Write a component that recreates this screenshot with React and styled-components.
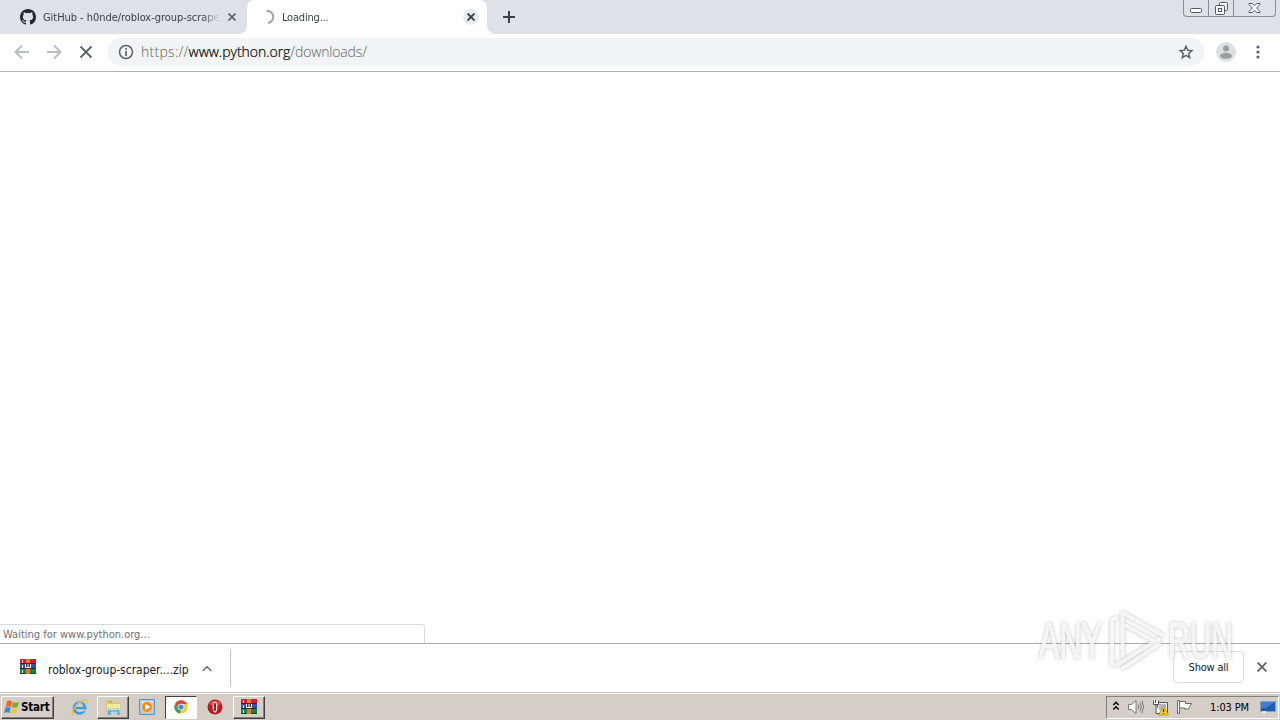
import styled, { createGlobalStyle, css } from 'styled-components'

const GlobalStyle = createGlobalStyle`
  * {
    box-sizing: border-box;
  }
  body {
    margin: 0;
    overflow: hidden;
    background: #ffffff;
    font-family: "DejaVu Sans Condensed", "DejaVu Sans", sans-serif;
    font-stretch: condensed;
    font-size: 11px;
    color: #202124;
  }
  svg {
    display: block;
    flex: none;
  }
`
const Screen = styled.div`
  position: relative;
  display: flex;
  flex-direction: column;
  width: 1280px;
  height: 720px;
  overflow: hidden;
`
const TabStrip = styled.div`
  display: flex;
  height: 34px;
  background: #dee1e6;
`
const Tab = styled.div`
  position: relative;
  display: flex;
  align-items: center;
  width: ${(p) => (p.$active ? 240 : 247)}px;
  height: 34px;
  padding-left: ${(p) => (p.$active ? 13 : 20)}px;
  padding-right: ${(p) => (p.$active ? 8 : 7)}px;
  ${(p) => p.$active && css`
    background: #ffffff;
    border-radius: 8px 8px 0 0;
    &::before, &::after {
      content: '';
      position: absolute;
      bottom: 0;
      width: 8px;
      height: 8px;
    }
    &::before {
      left: -8px;
      background: radial-gradient(circle at 0 0, transparent 7.5px, #ffffff 8px);
    }
    &::after {
      right: -8px;
      background: radial-gradient(circle at 100% 0, transparent 7.5px, #ffffff 8px);
    }
  `}
`
const TabTitle = styled.span`
  flex: 1;
  overflow: hidden;
  margin-left: ${(p) => p.$gap}px;
  padding-top: 1px;
  white-space: nowrap;
  line-height: 16px;
  letter-spacing: ${(p) => p.$spacing}px;
  color: #3c4043;
  mask-image: linear-gradient(to right, #000 calc(100% - 18px), transparent);
`
const TabClose = styled.span`
  display: flex;
  align-items: center;
  justify-content: center;
  width: 16px;
  height: 16px;
  margin-left: 4px;
  border-radius: 50%;
  background: ${(p) => (p.$active ? '#e8eaed' : 'transparent')};
`
const NewTab = styled.div`
  display: flex;
  align-items: center;
  justify-content: center;
  width: 28px;
  margin-left: 8px;
`
const WindowButtons = styled.div`
  display: flex;
  width: 93px;
  height: 17px;
  margin: 0 4px 0 auto;
  border: 1px solid #8a8d93;
  border-top: none;
  border-radius: 0 0 4px 4px;
`
const WindowButton = styled.span`
  display: flex;
  align-items: center;
  justify-content: center;
  width: ${(p) => p.$width}px;
  & + & {
    border-left: 1px solid #8a8d93;
  }
`
const Toolbar = styled.div`
  display: flex;
  align-items: center;
  height: 38px;
  padding: 0 14px 1px;
  border-bottom: 1px solid #b1b2b3;
  background: #ffffff;
`
const NavIcons = styled.div`
  display: flex;
  gap: 16px;
`
const Omnibox = styled.div`
  display: flex;
  align-items: center;
  width: 1096px;
  height: 28px;
  margin: 0 12px 0 14px;
  padding: 0 10px;
  border-radius: 14px;
  background: #f1f3f4;
`
const Url = styled.span`
  flex: 1;
  margin: 0 0 1px 7px;
  font-family: "Open Sans", sans-serif;
  font-stretch: normal;
  font-weight: 300;
  font-size: 14px;
  letter-spacing: -0.15px;
  color: #5f6368;
  b {
    font-weight: 300;
    letter-spacing: -0.03px;
    color: #000000;
    -webkit-text-stroke: 0.2px #000000;
  }
`
const Scheme = styled.span`
  letter-spacing: 0.28px;
`
const Viewport = styled.main`
  display: flex;
  align-items: flex-end;
  flex: 1;
`
const Status = styled.div`
  width: 425px;
  height: 19px;
  padding: 0 3px;
  border: 1px solid #d9dadb;
  border-left: none;
  border-bottom: none;
  border-radius: 0 4px 0 0;
  line-height: 19px;
  color: #6c6f73;
`
const Shelf = styled.div`
  display: flex;
  align-items: center;
  height: 50px;
  border-top: 1px solid #a9a9a9;
  border-bottom: 1px solid #c9c7c4;
`
const Download = styled.div`
  display: flex;
  align-items: center;
  width: 231px;
  height: 38px;
  padding-left: 20px;
  border-right: 1px solid #c4c4c4;
  > svg:first-child {
    margin-bottom: 2px;
  }
`
const FileName = styled.span`
  width: 142px;
  margin: 3px 12px 0 12px;
  white-space: nowrap;
  font-size: 12px;
  letter-spacing: -0.02px;
`
const ShowAll = styled.button`
  width: 71px;
  height: 32px;
  margin: 0 13px 3px auto;
  padding: 1px 0 0;
  border: 1px solid #dadce0;
  border-radius: 4px;
  background: transparent;
  font: inherit;
  letter-spacing: -0.2px;
  color: #202124;
`
const ShelfClose = styled.span`
  margin: 0 13px 3px 0;
`
const Taskbar = styled.footer`
  display: flex;
  align-items: center;
  height: 27px;
  border-top: 1px solid #ffffff;
  background: #d5cec7;
`
const StartButton = styled.div`
  display: flex;
  align-items: center;
  width: 53px;
  height: 23px;
  margin: 0 9px 0 1px;
  padding-left: 2px;
  border: 1px solid;
  border-color: #ffffff #404040 #404040 #ffffff;
  box-shadow: inset -1px -1px 0 #858078;
  font-weight: 700;
  font-size: 11.5px;
  letter-spacing: -0.2px;
  color: #000000;
`
const TaskItem = styled.div`
  display: flex;
  align-items: center;
  justify-content: center;
  width: 32px;
  height: 23px;
  margin-right: 2px;
  border: 1px solid transparent;
  ${(p) => p.$state === 'open' && css`
    border-color: #ffffff #404040 #404040 #ffffff;
    box-shadow: inset -1px -1px 0 #858078;
  `}
  ${(p) => p.$state === 'active' && css`
    border-color: #404040 #ffffff #ffffff #404040;
    background: #fdfdfc;
  `}
`
const Tray = styled.div`
  display: flex;
  align-items: center;
  width: 173px;
  height: 23px;
  margin: 0 1px 0 auto;
  padding-left: 5px;
  border: 1px solid;
  border-color: #858078 #ffffff #ffffff #858078;
  color: #000000;
`
const TrayIconList = styled.div`
  display: flex;
  align-items: center;
  gap: 7px;
`
const Clock = styled.span`
  width: 41px;
  margin: 0 9px 0 17px;
  white-space: nowrap;
  letter-spacing: -0.12px;
`
const MenuDots = styled.svg`
  margin-left: 20px;
`
const Watermark = styled.svg`
  position: absolute;
  left: 1030px;
  top: 600px;
  pointer-events: none;
  filter: drop-shadow(0 0 1px rgba(0, 0, 0, 0.18)) drop-shadow(0 0 2px rgba(0, 0, 0, 0.16));
`

const Cross = ({ size = 8, color = '#5f6368', width = 1.7 }) => (
  <svg width={size} height={size} viewBox="0 0 8 8" stroke={color} strokeWidth={width}>
    <path d="M.5.5l7 7M7.500.5l-7 7" />
  </svg>
)

const GitHubMark = () => (
  <svg width="16" height="16" viewBox="0 0 16 16" fill="#24292e">
    <path d="M8 0C3.58 0 0 3.58 0 8c0 3.54 2.29 6.53 5.47 7.59.4.07.55-.17.55-.38 0-.19-.01-.82-.01-1.49-2.01.37-2.53-.49-2.69-.94-.09-.23-.48-.94-.82-1.13-.28-.15-.68-.52-.01-.53.63-.01 1.08.58 1.23.82.72 1.21 1.87.87 2.33.66.07-.52.28-.87.51-1.07-1.78-.2-3.64-.89-3.64-3.95 0-.87.31-1.59.82-2.15-.08-.2-.36-1.02.08-2.12 0 0 .67-.21 2.2.82a7.6 7.6 0 0 1 4 0c1.53-1.04 2.2-.82 2.2-.82.44 1.1.16 1.92.08 2.12.51.56.82 1.27.82 2.15 0 3.07-1.87 3.75-3.65 3.95.29.25.54.73.54 1.48 0 1.07-.01 1.93-.01 2.2 0 .21.15.46.55.38A8 8 0 0 0 16 8c0-4.42-3.58-8-8-8z" />
  </svg>
)

const Books = () => (
  <svg width="16" height="16" viewBox="0 0 16 16">
    <path fill="#c42434" d="M0 0h16v5H0z" />
    <path fill="#3a50a8" d="M0 5h16v5H0z" />
    <path fill="#16843a" d="M0 10h16v5H0z" />
    <path fill="#571629" d="M0 4h16v1H0z" />
    <path fill="#17284e" d="M0 9h16v1H0z" />
    <path fill="#0b4d22" d="M0 14h16v1H0z" />
    <path fill="#e57535" d="M6 0h4v15H6z" />
    <path fill="#493021" d="M5 4h6v6H5z" />
    <path stroke="#fff" fill="none" d="M5.500 5v3.500h5V5M8 5v3.500" />
    <path stroke="#f2dcb1" d="M2.500 1v3M2.500 6v3M2.500 11v3" />
  </svg>
)

const WindowsFlag = () => (
  <svg width="17" height="17" viewBox="0 0 17 17">
    <path fill="#ee6827" d="M3 2.500c2-1.500 3.700-1 5.300 0L7 8C5 7 3.700 7 1.600 8z" />
    <path fill="#78ad36" d="M9 3c2 1 3.700.8 5.800-.2L13.500 8c-2 1-3.800 1-5.700.1z" />
    <path fill="#3989cc" d="M1.400 8.800c2-1 3.600-.9 5.300 0l-1.300 5.100C3.600 13 2 13 0 14z" />
    <path fill="#f7c43b" d="M7.500 9c2 1 3.800.9 5.700-.1L12 14c-2 1.200-3.900 1-5.800 0z" />
  </svg>
)

const Explorer = () => (
  <svg width="17" height="17" viewBox="0 0 17 17">
    <circle cx="8.500" cy="9" r="5.500" fill="none" stroke="#3b9be0" strokeWidth="2.700" />
    <path fill="#d5cec7" d="M9 10.300h8v2H9z" />
    <path fill="#3b9be0" d="M5 8h10.300v2.200H5z" />
    <path fill="none" stroke="#e8bd3c" strokeWidth="1.200" d="M2 15.800C-1 13 9-.5 15 1.300c1.500.6 1 2.500.5 3.500" />
    <path fill="none" stroke="#a5daf8" d="M4.500 6.500c2-3 5.500-3 7-1" />
  </svg>
)

const Folder = () => (
  <svg width="17" height="17" viewBox="0 0 17 17">
    <path fill="#e3c566" d="M1 1.500h6l1 2h7V13H1z" />
    <path fill="#f8e9a0" d="M2 5h13v7H2z" />
    <path fill="#7ebd65" d="M4 2h3v1.500H4z" />
    <path fill="#62b5e0" d="M3 9.500h11l1 6.500h-3v-3.500H6V16H2.500z" />
    <path fill="#d2f0fb" d="M4 10h9v1H4z" />
  </svg>
)

const MediaPlayer = () => (
  <svg width="16" height="16" viewBox="0 0 16 16">
    <path fill="#a9cce5" stroke="#5795c4" d="M.5.500h15v15H.5z" />
    <path fill="#d8eaf5" d="M2 2h12v2H2z" />
    <circle cx="8" cy="8" r="5.500" fill="#f0891e" stroke="#fad4a2" />
    <path fill="#fff" d="M6.200 4.800L11.500 8l-5.300 3.200z" />
  </svg>
)

const Chrome = () => (
  <svg width="14" height="14" viewBox="0 0 16 16">
    <circle cx="8" cy="8" r="7.500" fill="#f7cb32" />
    <path fill="#dc4638" d="M1.200 4.500A7.500 7.500 0 0 1 14.800 4.600H8L4.900 9.800z" />
    <path fill="#3ba457" d="M1.200 4.500L4.900 9.800 8 11.400l-1 4A7.500 7.500 0 0 1 1.200 4.500z" />
    <circle cx="8" cy="8" r="3.700" fill="#fff" />
    <circle cx="8" cy="8" r="2.900" fill="#4687e8" />
  </svg>
)

const Opera = () => (
  <svg width="16" height="16" viewBox="0 0 16 16">
    <circle cx="8" cy="8" r="7.500" fill="#b51b20" />
    <path fill="#df4c4a" d="M2 5c2-4.500 10-4.500 12 0-3 2-9 2-12 0z" />
    <ellipse cx="8" cy="8" rx="2.400" ry="5.600" fill="#fff" />
    <ellipse cx="8" cy="8" rx="1.200" ry="4.600" fill="#a5191e" />
  </svg>
)

const tasks = [
  { id: 'ie', icon: <Explorer /> },
  { id: 'folder', icon: <Folder />, state: 'open' },
  { id: 'media', icon: <MediaPlayer /> },
  { id: 'chrome', icon: <Chrome />, state: 'active' },
  { id: 'opera', icon: <Opera /> },
  { id: 'winrar', icon: <Books />, state: 'open' },
]

const TrayIcons = () => (
  <TrayIconList>
    <svg width="8" height="14" viewBox="0 0 8 14" fill="none" stroke="#000" strokeWidth="1.400">
      <path d="M1.300 5L4 2.300 6.700 5M1.300 9.500L4 6.800l2.700 2.700" />
    </svg>
    <svg width="18" height="16" viewBox="0 0 18 16" fill="none" stroke="#77787a">
      <path fill="#fff" d="M1.500 5.500h3L9 1.500v13l-4.500-4h-3z" />
      <path d="M11 5.500q1.500 2.500 0 5M13 3.500q2.500 4.500 0 9M15 1.500q3 6.500 0 13" />
    </svg>
    <svg width="17" height="17" viewBox="0 0 17 17">
      <path fill="#eef0f1" stroke="#55585a" d="M5.500 3.500h10v10h-10z" />
      <path fill="#b4b7ba" d="M7 5h7v6H7z" />
      <path fill="#fff" stroke="#4d5052" d="M1.500 1.500v4h5v-4M3.500 1v3M4 5.500v9h4" />
      <path fill="#f4ce17" stroke="#b58c09" strokeWidth=".7" d="M11.500 7l5 9h-10z" />
      <path stroke="#222" strokeWidth="1.200" d="M11.500 10v3M11.500 14v1" />
    </svg>
    <svg width="17" height="16" viewBox="0 0 17 16" fill="#fff" stroke="#66686a">
      <path d="M1.500 1.500h2v13h-2z" />
      <path d="M3.500 2.500h6v2h6l-2 3.500-1 2H8.500v-1h-5z" />
    </svg>
  </TrayIconList>
)

export default function App() {
  return (
    <Screen>
      <GlobalStyle />
      <TabStrip>
        <Tab>
          <GitHubMark />
          <TabTitle $gap={7} $spacing={-0.05}>GitHub - h0nde/roblox-group-scraper</TabTitle>
          <TabClose><Cross /></TabClose>
        </Tab>
        <Tab $active>
          <svg width="16" height="16" viewBox="0 0 16 16" fill="none" stroke="#a0a2a5" strokeWidth="2">
            <path d="M6.500 2a6 6 0 0 1 1.500 12" />
          </svg>
          <TabTitle $gap={6} $spacing={-0.2}>Loading...</TabTitle>
          <TabClose $active><Cross color="#3c4043" width={1.9} /></TabClose>
        </Tab>
        <NewTab>
          <svg width="12" height="12" viewBox="0 0 12 12" stroke="#3c4043" strokeWidth="2">
            <path d="M6 0v12M0 6h12" />
          </svg>
        </NewTab>
        <WindowButtons>
          <WindowButton $width={24}>
            <svg width="12" height="16" viewBox="0 0 12 16" fill="#fff" stroke="#555860">
              <rect x=".5" y="8.500" width="11" height="4" rx="1" />
            </svg>
          </WindowButton>
          <WindowButton $width={25}>
            <svg width="13" height="14" viewBox="0 0 13 14" fill="#f4f5f6" stroke="#555860">
              <rect x="4.500" y="1.500" width="8" height="8" rx="1" />
              <rect x=".5" y="4.500" width="9" height="9" rx="1" />
              <rect x="3.500" y="7.500" width="3" height="3" />
            </svg>
          </WindowButton>
          <WindowButton $width={42}>
            <svg width="13" height="12" viewBox="0 0 13 12" fill="#fff" stroke="#555860">
              <path d="M1 1.500h3l2.500 2 2.500-2h3v1L8.500 6l3.500 3.500v1H9l-2.500-2-2.500 2H1v-1L4.500 6 1 2.500z" />
            </svg>
          </WindowButton>
        </WindowButtons>
      </TabStrip>
      <Toolbar>
        <NavIcons>
          <svg width="16" height="16" viewBox="0 0 16 16" fill="none" stroke="#babcbe" strokeWidth="2">
            <path d="M15 8H2M8 1.500L1.500 8 8 14.500" />
          </svg>
          <svg width="16" height="16" viewBox="0 0 16 16" fill="none" stroke="#babcbe" strokeWidth="2">
            <path d="M1 8h13M8 1.500L14.500 8 8 14.500" />
          </svg>
          <svg width="16" height="16" viewBox="0 0 16 16" stroke="#5f6368" strokeWidth="1.900">
            <path d="M2.500 2.500l11 11M13.500 2.500l-11 11" />
          </svg>
        </NavIcons>
        <Omnibox>
          <svg width="16" height="16" viewBox="0 0 16 16" fill="none" stroke="#5f6368" strokeWidth="1.500">
            <circle cx="8" cy="8" r="6.500" />
            <path d="M8 7v5M8 4v1.700" strokeWidth="1.700" />
          </svg>
          <Url><Scheme>https://</Scheme><b>www.python.org</b>/downloads/</Url>
          <svg width="16" height="16" viewBox="0 0 16 16" fill="none" stroke="#5f6368" strokeWidth="1.500">
            <path d="M8 2.300l1.700 3.900 4.200.4-3.200 2.800 1 4.200L8 11.300l-3.700 2.300 1-4.200-3.200-2.800 4.200-.4z" />
          </svg>
        </Omnibox>
        <svg width="20" height="20" viewBox="0 0 20 20">
          <circle cx="10" cy="10" r="10" fill="#dedfe0" />
          <circle cx="10" cy="6.500" r="3" fill="#9b9d9f" />
          <ellipse cx="10" cy="13.800" rx="6" ry="3" fill="#9b9d9f" />
        </svg>
        <MenuDots width="4" height="14" viewBox="0 0 4 14" fill="#5f6368">
          <circle cx="2" cy="2" r="1.600" />
          <circle cx="2" cy="7" r="1.600" />
          <circle cx="2" cy="12" r="1.600" />
        </MenuDots>
      </Toolbar>
      <Viewport>
        <Status>Waiting for www.python.org...</Status>
      </Viewport>
      <Shelf>
        <Download>
          <Books />
          <FileName>roblox-group-scraper....zip</FileName>
          <svg width="10" height="7" viewBox="0 0 10 7" fill="none" stroke="#6e7175" strokeWidth="1.700">
            <path d="M.7 6L5 1.700 9.300 6" />
          </svg>
        </Download>
        <ShowAll>Show all</ShowAll>
        <ShelfClose><Cross size={10} width={1.5} /></ShelfClose>
      </Shelf>
      <Taskbar>
        <StartButton><WindowsFlag />Start</StartButton>
        {tasks.map((task) => (
          <TaskItem key={task.id} $state={task.state}>{task.icon}</TaskItem>
        ))}
        <Tray>
          <TrayIcons />
          <Clock>1:03 PM</Clock>
          <svg width="16" height="14" viewBox="0 0 16 14">
            <path fill="#1f5cad" stroke="#7aa4cb" d="M.5 1.500h15v10H.5z" />
            <path fill="#3a7fce" d="M1 2h14L6 8H1z" />
            <path fill="#e7eef5" d="M2 11h4v2H2z" />
          </svg>
        </Tray>
      </Taskbar>
      <Watermark width="215" height="80" viewBox="0 0 215 80">
        <g
          fill="#ffffff"
          stroke="#ffffff"
          strokeWidth=".8"
          opacity=".8"
          fontFamily="Liberation Sans Narrow, Liberation Sans, sans-serif"
          fontSize="29"
        >
          <text transform="translate(9 58) scale(1 1.750)" textLength="63" lengthAdjust="spacingAndGlyphs">ANY</text>
          <text transform="translate(138 58) scale(1 1.750)" textLength="65" lengthAdjust="spacingAndGlyphs">RUN</text>
        </g>
        <g fill="none" stroke="#ffffff" strokeWidth="4" strokeLinejoin="round" strokeLinecap="round" opacity=".8">
          <path d="M92.500 56V12.500L132 35M93 24l36 20-36 24" />
          <path d="M86 18l-4 2v44l5 1 42-26" />
        </g>
      </Watermark>
    </Screen>
  )
}
